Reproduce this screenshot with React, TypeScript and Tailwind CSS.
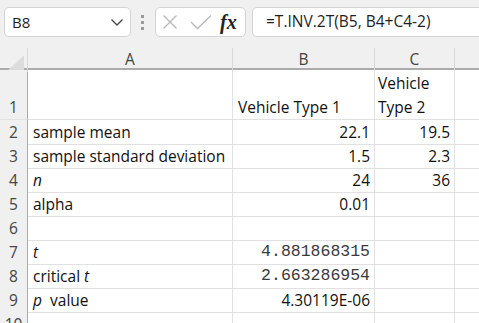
import React from "react"

const font = { fontFamily: '"Open Sans", "Noto Sans", sans-serif' }

type Row = {
  n: number
  a?: React.ReactNode
  b?: React.ReactNode
  c?: React.ReactNode
  mono?: boolean
  tall?: boolean
}

const rows: Row[] = [
  { n: 1, tall: true },
  { n: 2, a: "sample mean", b: "22.1", c: "19.5" },
  { n: 3, a: "sample standard deviation", b: "1.5", c: "2.3" },
  { n: 4, a: <i>n</i>, b: "24", c: "36" },
  { n: 5, a: "alpha", b: "0.01" },
  { n: 6 },
  { n: 7, a: <i>t</i>, b: "4.881868315", mono: true },
  { n: 8, a: <>critical <i>t</i></>, b: "2.663286954", mono: true },
  { n: 9, a: <><i>p</i>{"  value"}</>, b: "4.30119E-06" },
  { n: 10 },
]

const cols = "grid-cols-[28px_205px_142px_80px_1fr]"

function Toolbar() {
  return (
    <div className="flex items-center h-[45px] bg-[#f0f0f0] pl-[4px] pb-[1px]">
      <div className="flex items-center justify-between w-[127px] h-[30px] bg-white border border-[#d4d4d4] rounded-[5px] pl-[7px] pr-[6px]">
        <span className="text-[15px] text-[#1f1f1f]">B8</span>
        <svg width="14" height="9" viewBox="0 0 14 9" fill="none" stroke="#444" strokeWidth="1.3">
          <path d="M1.5 1.5 L7 7 L12.5 1.5" />
        </svg>
      </div>
      <div className="flex flex-col gap-[3px] ml-[10px] mr-[11px]">
        <span className="w-[3px] h-[3px] bg-[#9a9a9a]" />
        <span className="w-[3px] h-[3px] bg-[#9a9a9a]" />
        <span className="w-[3px] h-[3px] bg-[#9a9a9a]" />
      </div>
      <div className="flex items-center w-[91px] h-[30px] bg-white border border-[#d4d4d4] rounded-[5px] pl-[6px]">
        <svg width="16" height="16" viewBox="0 0 16 16" stroke="#b8b8b8" strokeWidth="1.3" fill="none">
          <path d="M1.5 1.5 L14.5 14.5 M14.5 1.5 L1.5 14.5" />
        </svg>
        <svg className="ml-[12px]" width="22" height="16" viewBox="0 0 22 16" stroke="#b8b8b8" strokeWidth="1.3" fill="none">
          <path d="M1 8 L7.5 14.5 L21 1.5" />
        </svg>
        <span
          className="ml-[8px] italic font-bold text-[20px] text-[#222] leading-none"
          style={{ fontFamily: '"Liberation Serif", serif' }}
        >
          fx
        </span>
      </div>
      <div className="flex items-center flex-1 h-[30px] ml-[6px] -mr-[8px] bg-white border border-[#d4d4d4] rounded-l-[5px] pl-[13px]">
        <span className="text-[15.5px] text-[#1f1f1f]">=T.INV.2T(B5, B4+C4-2)</span>
      </div>
    </div>
  )
}

function Header() {
  return (
    <div className={`grid ${cols} h-[25px] bg-[#f0f0f0] border-b-2 border-[#ababab]`}>
      <div className="relative border-r border-[#d9d9d9] mt-[3px]">
        <div
          className="absolute left-[8px] bottom-[2px] w-[16px] h-[15px] bg-[#dcdcdc]"
          style={{ clipPath: "polygon(100% 0, 100% 100%, 0 100%)" }}
        />
      </div>
      {["A", "B", "C", ""].map((l, i) => (
        <div
          key={i}
          className={`flex items-end justify-center pb-[1px] text-[15.5px] text-[#444] mt-[3px] ${i < 3 ? "border-r border-[#d9d9d9]" : ""}`}
        >
          {l}
        </div>
      ))}
    </div>
  )
}

function Cell({ children, right, mono, last }: { children?: React.ReactNode; right?: boolean; mono?: boolean; last?: boolean }) {
  return (
    <div
      className={`flex items-end whitespace-pre border-b border-[#e1e1e1] ${last ? "" : "border-r"} ${right ? "justify-end pr-[4px]" : "pl-[5px]"} ${mono ? "text-[16.5px] text-[#3a3a3a]" : "text-[15.5px] text-[#111]"}`}
      style={mono ? { fontFamily: '"Liberation Mono", monospace' } : undefined}
    >
      {children}
    </div>
  )
}

export default function App() {
  return (
    <div className="w-[479px] h-[323px] overflow-hidden bg-white" style={font}>
      <Toolbar />
      <Header />
      {rows.map((r) => (
        <div key={r.n} className={`grid ${cols} ${r.tall ? "h-[50px]" : "h-[24px]"} leading-[24px]`}>
          <div className="flex items-end justify-center bg-[#f0f0f0] border-r border-b border-r-[#ababab] border-b-[#e1e1e1] text-[15.5px] text-[#444]">
            {r.n}
          </div>
          <Cell>{r.a}</Cell>
          {r.tall ? (
            <Cell>Vehicle Type 1</Cell>
          ) : (
            <Cell right mono={r.mono}>{r.b}</Cell>
          )}
          {r.tall ? (
            <div className="flex flex-col justify-end pl-[3px] border-r border-b border-[#e1e1e1] text-[15.5px] text-[#111]">
              <span>Vehicle</span>
              <span>Type 2</span>
            </div>
          ) : (
            <Cell right>{r.c}</Cell>
          )}
          <Cell last />
        </div>
      ))}
    </div>
  )
}
